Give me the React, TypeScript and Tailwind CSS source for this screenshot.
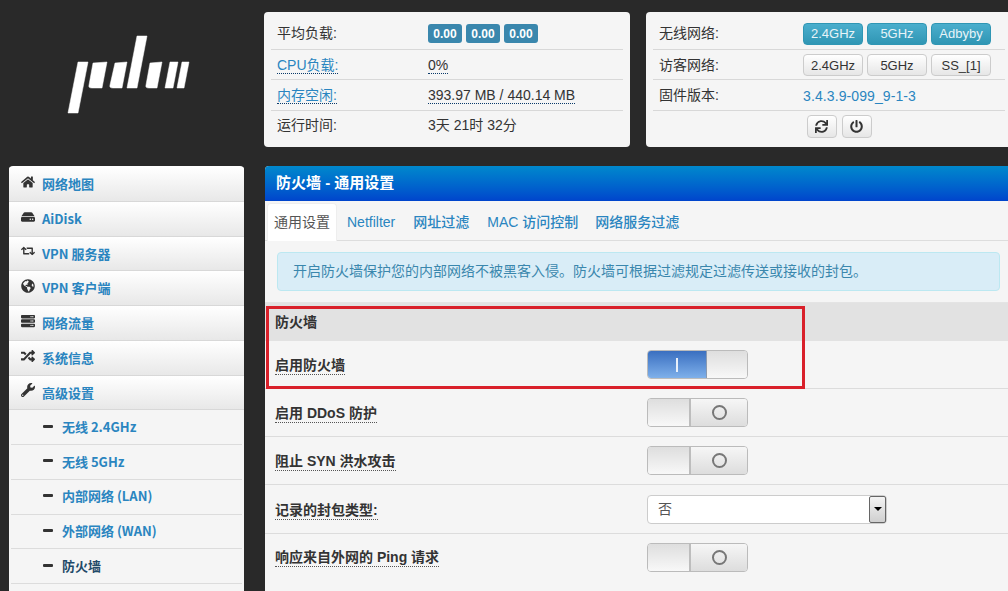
import React from 'react';
import {
  FaHome,
  FaHdd,
  FaRetweet,
  FaGlobeAmericas,
  FaServer,
  FaRandom,
  FaWrench,
  FaSync,
  FaPowerOff,
} from 'react-icons/fa';

const navItems = [
  { label: '网络地图', icon: <FaHome /> },
  { label: 'AiDisk', icon: <FaHdd /> },
  { label: 'VPN 服务器', icon: <FaRetweet /> },
  { label: 'VPN 客户端', icon: <FaGlobeAmericas /> },
  { label: '网络流量', icon: <FaServer /> },
  { label: '系统信息', icon: <FaRandom /> },
  { label: '高级设置', icon: <FaWrench /> },
];

const subItems = ['无线 2.4GHz', '无线 5GHz', '内部网络 (LAN)', '外部网络 (WAN)', '防火墙', ''];

function Logo() {
  return (
    <svg width="140" height="90" viewBox="60 30 140 90" fill="#fff" stroke="#fff" strokeWidth="0.5">
      {/* p */}
      <path d="M78 62 L88 62 L78 113 L68 113 Z" />
      <path d="M93 63 L107 62 L102 88 L92 88 Q88 88 89 85 Z" />
      {/* d */}
      <path d="M115 63 L127 62 L122 88 L113 88 Q109 88 110 85 Z" />
      <path d="M137 36 L147 36 L137 88 L127 88 Z" />
      {/* a */}
      <path d="M150 63 L162 62 L157 88 L149 88 Q145 88 146 85 Z" />
      {/* n */}
      <path d="M170 62 L178 62 L173 88 L165 88 Z" />
      <path d="M182 62 L189 62 L184 88 L177 88 Z" />
    </svg>
  );
}

function StatRow({ label, link, last, low, children }: { label: string; link?: boolean; last?: boolean; low?: boolean; children: React.ReactNode }) {
  return (
    <div className={`flex items-center h-[30.5px] px-[6px] ${low ? 'pt-[2px]' : ''} ${last ? '' : 'border-b border-[#d8d8d8]'}`}>
      <div className="w-[151px] shrink-0">
        <span className={link ? 'text-[#2a85c0] border-b border-dotted border-[#0a3a6a] leading-[16px] inline-block' : 'text-[#333]'}>
          {label}:
        </span>
      </div>
      {children}
    </div>
  );
}

function Badge({ children }: { children: React.ReactNode }) {
  return (
    <span className="w-[34px] h-[19px] rounded-[3px] bg-[#3a87ad] text-white text-[12px] font-bold flex items-center justify-center">
      {children}
    </span>
  );
}

function TopButton({ on, children }: { on?: boolean; children: React.ReactNode }) {
  return (
    <span
      className={`w-[60px] h-[22px] rounded-[4px] text-[13px] flex items-center justify-center border ${
        on
          ? 'bg-gradient-to-b from-[#4aaecd] to-[#2f96b4] border-[#2f96b4] text-[#e8f4f8]'
          : 'bg-gradient-to-b from-white to-[#e6e6e6] border-[#ccc] text-[#333]'
      }`}
    >
      {children}
    </span>
  );
}

function Toggle({ on }: { on?: boolean }) {
  if (on) {
    return (
      <div className="w-[101px] h-[29px] rounded-[4px] border border-[#bbb] overflow-hidden flex">
        <div className="w-[58px] bg-gradient-to-b from-[#3a6fc0] to-[#7fb0ea] flex items-center justify-center">
          <span className="w-[2px] h-[14px] bg-[#e8f0fa]" />
        </div>
        <div className="flex-1 bg-gradient-to-b from-[#dedede] to-[#f8f8f8] border-l border-[#8a9ab0]" />
      </div>
    );
  }
  return (
    <div className="w-[101px] h-[29px] rounded-[4px] border border-[#bbb] overflow-hidden flex">
      <div className="w-[43px] bg-gradient-to-b from-[#dedede] to-[#f8f8f8] border-r-2 border-[#bdbdbd]" />
      <div className="flex-1 bg-gradient-to-b from-[#f6f6f6] to-[#dddddd] flex items-center justify-center pl-[1px]">
        <span className="w-[15px] h-[15px] rounded-full border-2 border-[#777]" />
      </div>
    </div>
  );
}

function FormRow({ label, children, h }: { label: string; children: React.ReactNode; h: string }) {
  return (
    <div className={`flex items-center pl-[10px] border-b border-[#dcdcdc] ${h}`}>
      <div className="w-[372px] shrink-0 pt-[2px]">
        <span className="font-bold text-[#333] border-b border-dotted border-[#555] leading-[17px] inline-block">{label}</span>
      </div>
      {children}
    </div>
  );
}

export default function App() {
  return (
    <div
      className="relative w-[1008px] h-[591px] overflow-hidden bg-[#292929] flex text-[14px]"
      style={{ fontFamily: '"Liberation Sans", "Noto Sans CJK SC", sans-serif' }}
    >
      {/* Sidebar */}
      <aside className="w-[265px] shrink-0">
        <div className="h-[166px] pt-[30px] pl-[60px]">
          <Logo />
        </div>
        <nav
          className="ml-[9px] w-[235px] rounded-t-[4px] overflow-hidden bg-white pt-[1px]"
          style={{ fontFamily: '"Noto Sans CJK SC", sans-serif' }}
        >
          {navItems.map((item) => (
            <div
              key={item.label}
              className="h-[34.75px] flex items-center pl-[12px] gap-[7px] bg-gradient-to-b from-white to-[#e8e8e8] border-b border-[#d8d8d8]"
            >
              <span className="w-[14px] text-[14px] text-[#333] flex justify-center -mt-[4px]">{item.icon}</span>
              <span className="text-[13px] font-bold text-[#2a85c0]">{item.label}</span>
            </div>
          ))}
          <div className="bg-[#f5f5f5]">
            {subItems.map((label, i) => (
              <div key={i} className="mx-[2px] h-[34.75px] flex items-center pl-[32px] gap-[9px] border-b border-[#dcdcdc]">
                {label && (
                  <>
                    <span className="w-[10px] h-[3px] rounded-[1px] bg-[#333] -mt-[2px]" />
                    <span className={`text-[13px] font-bold -mt-[1px] ${label === '防火墙' ? 'text-[#1f4a68]' : 'text-[#2a85c0]'}`}>{label}</span>
                  </>
                )}
              </div>
            ))}
          </div>
        </nav>
      </aside>

      {/* Content */}
      <main className="w-[770px] shrink-0">
        <div className="flex h-[166px] pt-[12px] gap-[16px] -ml-[1px]">
          <section className="w-[366px] shrink-0 h-[135px] rounded-[4px] bg-[#f5f5f5] px-[1px] py-[7px] text-[#333]">
            <div className="mx-[6px]">
              <StatRow label="平均负载">
                <div className="flex gap-[4px]">
                  <Badge>0.00</Badge>
                  <Badge>0.00</Badge>
                  <Badge>0.00</Badge>
                </div>
              </StatRow>
              <StatRow label="CPU负载" link low>
                <span className="border-b border-dotted border-[#0a3a6a] leading-[16px]">0%</span>
              </StatRow>
              <StatRow label="内存空闲" link low>
                <span className="border-b border-dotted border-[#0a3a6a] leading-[16px]">393.97 MB / 440.14 MB</span>
              </StatRow>
              <StatRow label="运行时间" last>
                <span>3天 21时 32分</span>
              </StatRow>
            </div>
          </section>

          <section className="w-[400px] shrink-0 h-[135px] rounded-[4px] bg-[#f5f5f5] py-[7px] text-[#333]">
            <div className="ml-[7px] w-[352px]">
              <StatRow label="无线网络">
                <div className="flex gap-[4px] -ml-[7px]">
                  <TopButton on>2.4GHz</TopButton>
                  <TopButton on>5GHz</TopButton>
                  <TopButton on>Adbyby</TopButton>
                </div>
              </StatRow>
              <StatRow label="访客网络" low>
                <div className="flex gap-[4px] -ml-[7px]">
                  <TopButton>2.4GHz</TopButton>
                  <TopButton>5GHz</TopButton>
                  <TopButton>SS_[1]</TopButton>
                </div>
              </StatRow>
              <StatRow label="固件版本" low>
                <span className="tracking-[0.1px] text-[#2a85c0] -ml-[7px] pt-[1px]">3.4.3.9-099_9-1-3</span>
              </StatRow>
              <div className="flex justify-center gap-[5px] pt-[4px] pl-[20px]">
                <span className="w-[30px] h-[23px] rounded-[4px] border border-[#ccc] bg-gradient-to-b from-white to-[#e6e6e6] flex items-center justify-center text-[13px] text-[#333]">
                  <FaSync />
                </span>
                <span className="w-[30px] h-[23px] rounded-[4px] border border-[#ccc] bg-gradient-to-b from-white to-[#e6e6e6] flex items-center justify-center text-[13px] text-[#333]">
                  <FaPowerOff />
                </span>
              </div>
            </div>
          </section>
        </div>

        <section className="h-[425px] rounded-t-[4px] overflow-hidden bg-[#f5f5f5]">
          <div className="h-[35px] flex items-center pl-[11px] bg-gradient-to-b from-[#0088cc] to-[#0044cc] text-white text-[15px] font-bold">
            防火墙 - 通用设置
          </div>

          {/* Tabs */}
          <div className="h-[40px] pl-[2px] pt-[2px] flex gap-[4px] border-b border-[#ddd]">
            <span className="w-[70px] h-[38px] -mr-[1px] bg-white rounded-t-[4px] border border-[#eee] border-b-0 flex items-center justify-center text-[#555]">
              通用设置
            </span>
            <span className="h-[38px] px-[7px] flex items-center text-[#2a85c0]">Netfilter</span>
            <span className="h-[38px] px-[7px] flex items-center font-medium text-[#2a85c0]">网址过滤</span>
            <span className="h-[38px] px-[7px] -mr-[1px] flex items-center font-medium text-[#2a85c0]">MAC 访问控制</span>
            <span className="h-[38px] px-[7px] flex items-center font-medium text-[#2a85c0]">网络服务过滤</span>
          </div>

          {/* Notice */}
          <div className="h-[62px] border-b border-[#e4e4e4] pt-[11px] pl-[12px]">
            <div className="w-[723px] h-[39px] rounded-[4px] bg-[#d9edf7] border border-[#bce8f1] text-[#3a87ad] flex items-center pl-[15px]">
              开启防火墙保护您的内部网络不被黑客入侵。防火墙可根据过滤规定过滤传送或接收的封包。
            </div>
          </div>

          <div className="h-[38px] bg-[#e2e2e2] flex items-center pl-[10px] font-bold text-[#333]">防火墙</div>

          <FormRow label="启用防火墙" h="h-[48px]">
            <Toggle on />
          </FormRow>
          <FormRow label="启用 DDoS 防护" h="h-[48px]">
            <Toggle />
          </FormRow>
          <FormRow label="阻止 SYN 洪水攻击" h="h-[48px]">
            <Toggle />
          </FormRow>
          <FormRow label="记录的封包类型:" h="h-[49px]">
            <div className="w-[240px] h-[29px] rounded-[4px] border border-[#ccc] bg-white flex items-center justify-between">
              <span className="pl-[10px] pt-[1px] text-[#555]">否</span>
              <span className="w-[17px] h-[27px] border border-[#666] rounded-[2px] bg-gradient-to-b from-[#f4f4f4] to-[#cfcfcf] flex items-center justify-center">
                <span className="w-0 h-0 border-x-[4px] border-x-transparent border-t-[4px] border-t-black" />
              </span>
            </div>
          </FormRow>
          <div className="flex items-center pl-[10px] h-[47px]">
            <div className="w-[372px] shrink-0">
              <span className="font-bold text-[#333] border-b border-dotted border-[#555] leading-[17px] inline-block">响应来自外网的 Ping 请求</span>
            </div>
            <Toggle />
          </div>
        </section>
      </main>

      {/* Red annotation */}
      <div className="absolute left-[266px] top-[306px] w-[539px] h-[83px] border-[3px] border-[#d9202a] pointer-events-none" />
    </div>
  );
}
